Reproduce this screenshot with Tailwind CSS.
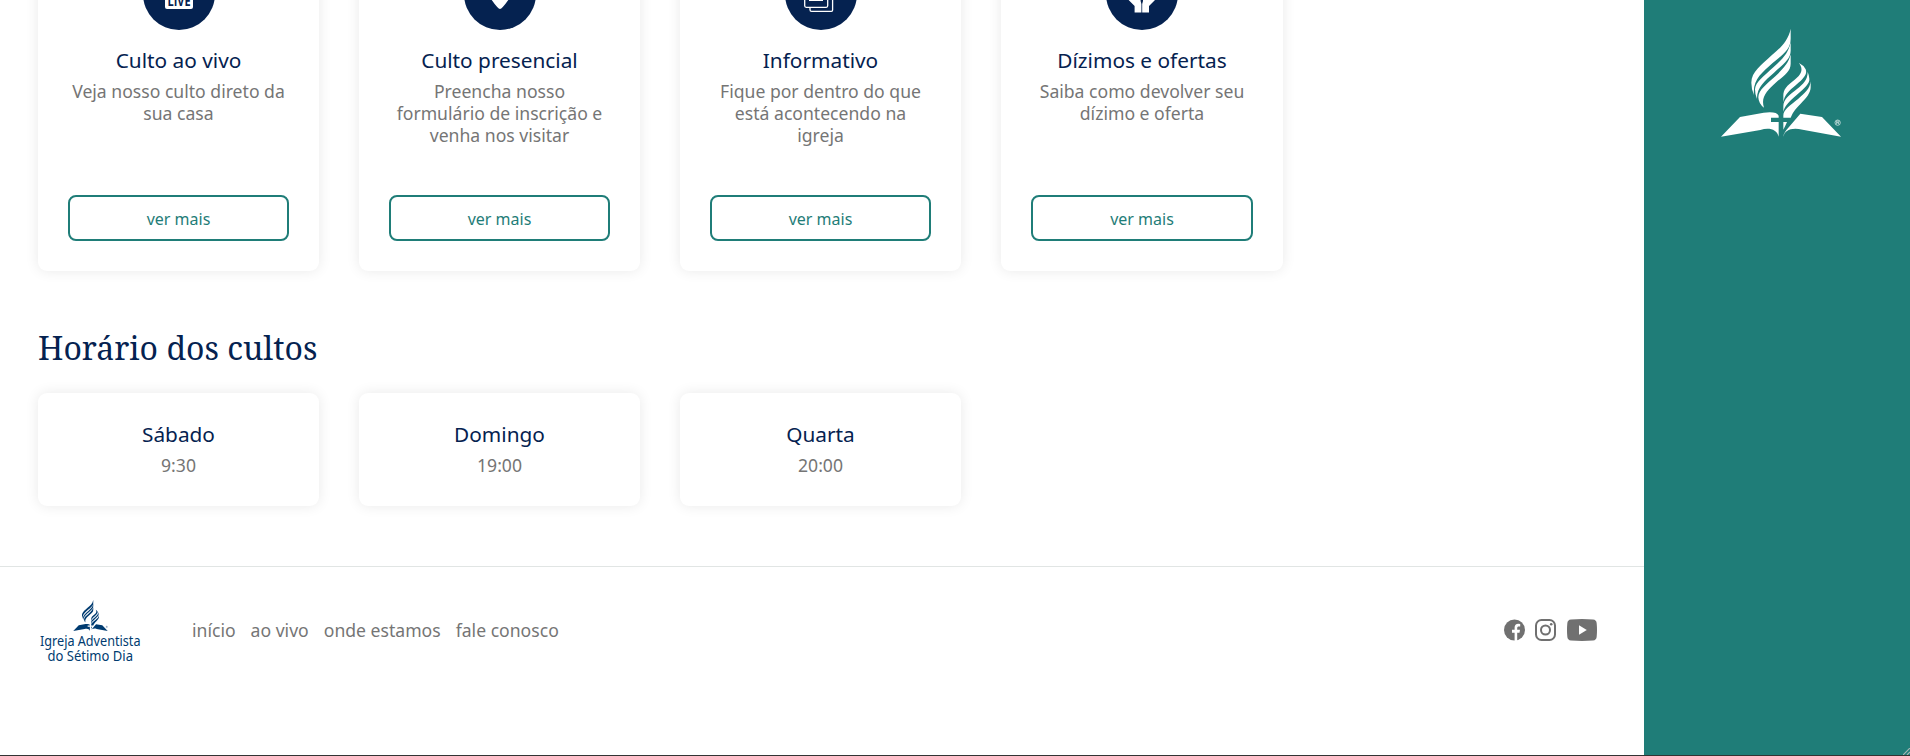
<!DOCTYPE html>
<html lang="pt-BR">
<head>
<meta charset="utf-8">
<title>Igreja Adventista do Sétimo Dia</title>
<script src="https://cdn.jsdelivr.net/npm/@tailwindcss/browser@4"></script>
</head>
<body class="h-[756px] overflow-hidden bg-white font-['Noto_Sans',sans-serif] text-[#757575]">
<svg class="hidden">
  <symbol id="flame" viewBox="240 84 366 330">
    <g transform="translate(315 78)">
      <path d="M137 8 C129 46 106 66 80 88 C50 116 19 138 19 170 Q19 190 27 207 C22 162 51 140 82 112 C112 86 137 72 137 38Z"/>
      <path d="M137 48 C131 82 112 99 86 123 C56 151 31 168 30 190 Q30 206 36 219 C35 184 59 165 87 140 C115 114 137 99 137 74Z"/>
      <path d="M137 85 C131 112 114 128 91 151 C63 177 41 191 40 214 Q41 234 57 245 C46 212 68 192 92 170 C116 149 137 137 137 113Z"/>
      <path d="M162 111 C177 131 168 146 149 161 C125 180 115 189 115 211 L115 229 C118 207 133 194 152 178 C176 158 188 145 182 130 Q175 117 162 111Z"/>
      <path d="M188 138 C188 161 175 174 156 189 C133 207 115 220 115 241 L115 257 C120 237 136 224 155 207 C179 186 195 172 193 158 Q192 147 188 138Z"/>
      <path d="M197 166 C195 188 180 201 160 218 C137 237 115 250 115 268 L115 275 L137 275 C145 255 155 245 167 233 C184 217 197 200 197 184Z"/>
    </g>
    <path d="M243 410 L300 351 L371 338 Q410 333 416 347 L416 353 L393 353 L393 366 L416 366 L416 410 C410 388 388 382 361 390Z"/>
    <path d="M430 366 L441 366 Q436 378 430 389Z M430 410 Q430 399 447 381 L481 341 L546 351 L603 410 L488 389 C453 381 434 391 430 410Z"/>
    <g fill="none" stroke="currentColor" stroke-width="1.8"><circle cx="593" cy="368" r="8"/><path d="M590 373v-10h4q3 0 3 2.500t-3 2.500h-4m4 0l3 5"/></g>
  </symbol>
</svg>
<div class="flex h-[755px]">
  <main class="flex w-[1644px] shrink-0 flex-col">
    <section class="-mt-[72px] flex gap-10 pl-[38px] text-center">
      <article class="flex h-[343px] w-[281px] flex-col items-center rounded-[9px] p-[30px] shadow-[0_0_14px_rgba(0,0,0,0.09)]">
        <svg class="size-[72px] shrink-0" viewBox="0 0 72 72"><circle cx="36" cy="36" r="36" fill="#052250"/><rect x="22" y="30" width="28" height="21" rx="2" fill="#fff"/><text x="36" y="48" text-anchor="middle" font-family="Open Sans" font-weight="700" font-size="14" textLength="23" lengthAdjust="spacingAndGlyphs" fill="#052250">LIVE</text></svg>
        <h3 class="mt-[15px] text-[20.8px] leading-[30px] text-[#052250]">Culto ao vivo</h3>
        <p class="mt-[5px] text-[17.6px] leading-[22px]">Veja nosso culto direto da sua casa</p>
        <a class="mt-auto flex h-[46px] w-full shrink-0 items-center justify-center rounded-lg border-2 border-[#1f7d78] pt-0.5 text-base text-[#1f7d78]">ver mais</a>
      </article>
      <article class="flex h-[343px] w-[281px] flex-col items-center rounded-[9px] p-[30px] shadow-[0_0_14px_rgba(0,0,0,0.09)]">
        <svg class="size-[72px] shrink-0" viewBox="0 0 72 72"><circle cx="36" cy="36" r="36" fill="#052250"/><path d="M36 51 Q34 51 27 41 Q21 33 23 27 Q26 19 36 19 Q46 19 49 27 Q51 33 45 41 Q38 51 36 51Z" fill="#fff"/></svg>
        <h3 class="mt-[15px] text-[20.8px] leading-[30px] text-[#052250]">Culto presencial</h3>
        <p class="mt-[5px] text-[17.6px] leading-[22px]">Preencha nosso formulário de inscrição e venha nos visitar</p>
        <a class="mt-auto flex h-[46px] w-full shrink-0 items-center justify-center rounded-lg border-2 border-[#1f7d78] pt-0.5 text-base text-[#1f7d78]">ver mais</a>
      </article>
      <article class="flex h-[343px] w-[281px] flex-col items-center rounded-[9px] p-[30px] shadow-[0_0_14px_rgba(0,0,0,0.09)]">
        <svg class="size-[72px] shrink-0" viewBox="0 0 72 72"><circle cx="36" cy="36" r="36" fill="#052250"/><g fill="none" stroke="#fff" stroke-width="1.3"><rect x="19.7" y="22" width="23" height="27.3" rx="1.5"/><path d="M25 49.5v2.2q0 1.6 1.6 1.6h19.8q1.2 0 1.2-1.4V28q0-1.5-1.5-1.5h-3.2M24 42.4h14"/></g></svg>
        <h3 class="mt-[15px] text-[20.8px] leading-[30px] text-[#052250]">Informativo</h3>
        <p class="mt-[5px] text-[17.6px] leading-[22px]">Fique por dentro do que está acontecendo na igreja</p>
        <a class="mt-auto flex h-[46px] w-full shrink-0 items-center justify-center rounded-lg border-2 border-[#1f7d78] pt-0.5 text-base text-[#1f7d78]">ver mais</a>
      </article>
      <article class="flex h-[343px] w-[282px] flex-col items-center rounded-[9px] p-[30px] shadow-[0_0_14px_rgba(0,0,0,0.09)]">
        <svg class="size-[72px] shrink-0" viewBox="0 0 72 72"><circle cx="36" cy="36" r="36" fill="#052250"/><g fill="#fff"><path d="M28.600 54.500V48l-6-6V30h4l8 9v4l.8 3v8.500z"/><path d="M43 54.500V48l6-6V30h-4l-8 9v4l-.8 3v8.500z"/></g></svg>
        <h3 class="mt-[15px] text-[20.8px] leading-[30px] text-[#052250]">Dízimos e ofertas</h3>
        <p class="mt-[5px] text-[17.6px] leading-[22px]">Saiba como devolver seu dízimo e oferta</p>
        <a class="mt-auto flex h-[46px] w-full shrink-0 items-center justify-center rounded-lg border-2 border-[#1f7d78] pt-0.5 text-base text-[#1f7d78]">ver mais</a>
      </article>
    </section>
    <section class="mt-[54px] pl-[38px]">
      <h2 class="h-[68px] text-[32px] leading-[46px] text-[#052250] font-['Noto_Serif','Liberation_Serif',serif]">Horário dos cultos</h2>
      <div class="flex gap-10 text-center">
        <article class="h-[113px] w-[281px] rounded-[9px] pt-[26px] shadow-[0_0_14px_rgba(0,0,0,0.09)]">
          <h3 class="text-[20.8px] leading-[30px] text-[#052250]">Sábado</h3>
          <p class="mt-[5px] text-[17.6px] leading-[22px]">9:30</p>
        </article>
        <article class="h-[113px] w-[281px] rounded-[9px] pt-[26px] shadow-[0_0_14px_rgba(0,0,0,0.09)]">
          <h3 class="text-[20.8px] leading-[30px] text-[#052250]">Domingo</h3>
          <p class="mt-[5px] text-[17.6px] leading-[22px]">19:00</p>
        </article>
        <article class="h-[113px] w-[281px] rounded-[9px] pt-[26px] shadow-[0_0_14px_rgba(0,0,0,0.09)]">
          <h3 class="text-[20.8px] leading-[30px] text-[#052250]">Quarta</h3>
          <p class="mt-[5px] text-[17.6px] leading-[22px]">20:00</p>
        </article>
      </div>
    </section>
    <footer class="mt-[60px] flex h-[129px] items-center border-t border-[#e1e5e4] pr-[47px] pb-0.5 pl-[38px]">
      <div class="flex h-[66px] w-[104px] flex-col text-[#003b70]">
        <svg class="mt-0.5 ml-[35px] h-[33px] w-[35px] shrink-0" fill="currentColor"><use href="#flame" width="35" height="33"/></svg>
        <svg class="h-8 w-[104px] shrink-0 overflow-visible" fill="currentColor" font-family="Noto Sans" font-size="14.2">
          <text x="2" y="14" textLength="100.500" lengthAdjust="spacingAndGlyphs">Igreja Adventista</text>
          <text x="9.500" y="29" textLength="85.500" lengthAdjust="spacingAndGlyphs">do Sétimo Dia</text>
        </svg>
      </div>
      <nav class="ml-[50px] flex gap-[15px] text-[17.6px]"><a>início</a><a>ao vivo</a><a>onde estamos</a><a>fale conosco</a></nav>
      <div class="ml-auto flex items-center gap-[10px]">
        <svg class="h-[22px] w-[21px]" viewBox="0 0 21 22"><circle cx="10.500" cy="11" r="10.500" fill="#707070"/><path d="M10.600 22V13.800H8V10.700h2.600V8.600C10.600 6 12 4.700 14.300 4.700q1 0 1.900.2v2.500h-1.300c-1.300 0-1.700.7-1.700 1.500v1.800H16l-.5 3.100h-2.300V22z" fill="#fff"/></svg>
        <svg class="h-[22px] w-[21px]" viewBox="0 0 21 22"><g fill="none" stroke="#707070"><rect x="1" y="1" width="19" height="20" rx="5.500" stroke-width="2"/><circle cx="10.500" cy="11" r="4.500" stroke-width="2"/></g><circle cx="16.200" cy="5.200" r="1.300" fill="#707070"/></svg>
        <svg class="ml-px h-[22px] w-[30px]" viewBox="0 0 30 22"><path d="M4 .5Q15-.3 26 .5q3.500.3 3.700 4 .6 6.500 0 13-.2 3.700-3.700 4-11 .8-22 0-3.500-.3-3.700-4-.6-6.500 0-13Q.5.800 4 .5" fill="#707070"/><path d="M12 6.300v9.400l7.800-4.700z" fill="#fff"/></svg>
      </div>
    </footer>
  </main>
  <aside class="relative flex-1 bg-[#1f7d78] pt-7 pl-[76px]">
    <svg class="h-[110px] w-[122px] text-white" fill="currentColor"><use href="#flame" width="122" height="110"/></svg>
    <svg class="absolute right-0 bottom-0 size-[7px]" viewBox="0 0 7 7"><path d="M0 7l7-7M4 7l3-3" stroke="#a5b7b5" stroke-width="1.200"/></svg>
  </aside>
</div>
<div class="h-px bg-[#333]"></div>
</body>
</html>
